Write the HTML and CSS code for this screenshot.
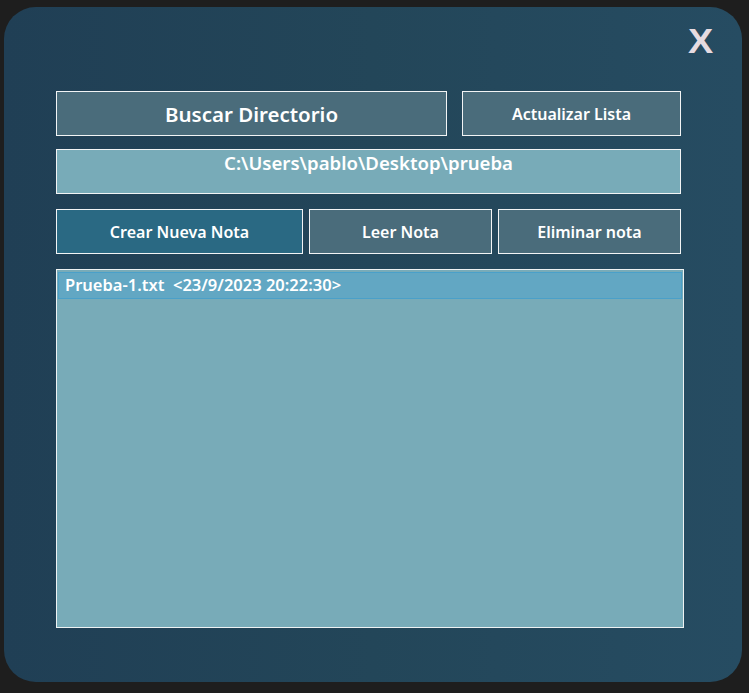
FILE: index.html
```html
<!DOCTYPE html>
<html lang="es">
<head>
<meta charset="utf-8">
<title>Notas</title>
<link rel="stylesheet" href="styles.css">
</head>
<body>
<div class="desk">
  <div class="window">
    <div class="titlebar"><span class="close">X</span></div>
    <div class="row row-top">
      <button class="btn btn-big">Buscar Directorio</button>
      <button class="btn">Actualizar Lista</button>
    </div>
    <div class="path">C:\Users\pablo\Desktop\prueba</div>
    <div class="row row-actions">
      <button class="btn btn-primary">Crear Nueva Nota</button>
      <button class="btn">Leer Nota</button>
      <button class="btn">Eliminar nota</button>
    </div>
    <div class="list">
      <div class="item">Prueba-1.txt &nbsp;&lt;23/9/2023 20:22:30&gt;</div>
    </div>
  </div>
</div>
</body>
</html>
```

FILE: styles.css
```css
html, body {
  margin: 0;
  padding: 0;
  background: #1e1e1e;
  width: 749px;
  height: 693px;
  overflow: hidden;
}
.desk {
  padding: 7px 7px 11px 4px;
}
.window {
  width: 738px;
  height: 675px;
  box-sizing: border-box;
  border-radius: 32px;
  background: linear-gradient(to right, #203f55 0%, #234659 50%, #264c62 100%);
  padding: 16px 58px 0 52px;
  display: flex;
  flex-direction: column;
  font-family: "Noto Sans", "Open Sans", sans-serif;
  color: #ffffff;
}
.titlebar {
  height: 68px;
  display: flex;
  justify-content: flex-end;
  margin-right: -28px;
}
.close {
  font-family: "Liberation Sans", Arial, sans-serif;
  font-weight: 700;
  font-size: 35px;
  line-height: 35px;
  color: #e6dbe1;
  height: 35px;
  transform: scaleX(1.08);
}
.row {
  display: flex;
  width: 625px;
}
.row-top {
  gap: 15px;
  height: 45px;
}
.btn {
  font-family: "Noto Sans", "Open Sans", sans-serif;
  font-weight: 600;
  font-size: 16px;
  color: #ffffff;
  background: #4a6c7b;
  border: 1px solid #f2f4f5;
  padding: 0;
  margin: 0;
  height: 45px;
  flex: 0 0 auto;
}
.row-top .btn-big {
  width: 391px;
  font-size: 20.5px;
}
.row-top .btn:last-child {
  width: 219px;
}
.path {
  margin-top: 13px;
  width: 625px;
  height: 45px;
  box-sizing: border-box;
  background: #78abb8;
  border: 1px solid #f2f4f5;
  text-align: center;
  font-weight: 600;
  font-size: 18.6px;
  line-height: 26px;
}
.row-actions {
  margin-top: 15px;
  gap: 6px;
}
.row-actions .btn {
  width: 183px;
}
.row-actions .btn-primary {
  width: 247px;
  background: #2a6983;
}
.list {
  margin-top: 15px;
  width: 628px;
  height: 359px;
  box-sizing: border-box;
  background: #78abb8;
  border: 1px solid #eef2f3;
  padding: 2px 1px;
}
.item {
  height: 27px;
  box-sizing: border-box;
  background: #62a7c3;
  border: 1px solid #4aa0c9;
  font-weight: 600;
  font-size: 16.5px;
  line-height: 24px;
  padding-left: 6px;
}
```
